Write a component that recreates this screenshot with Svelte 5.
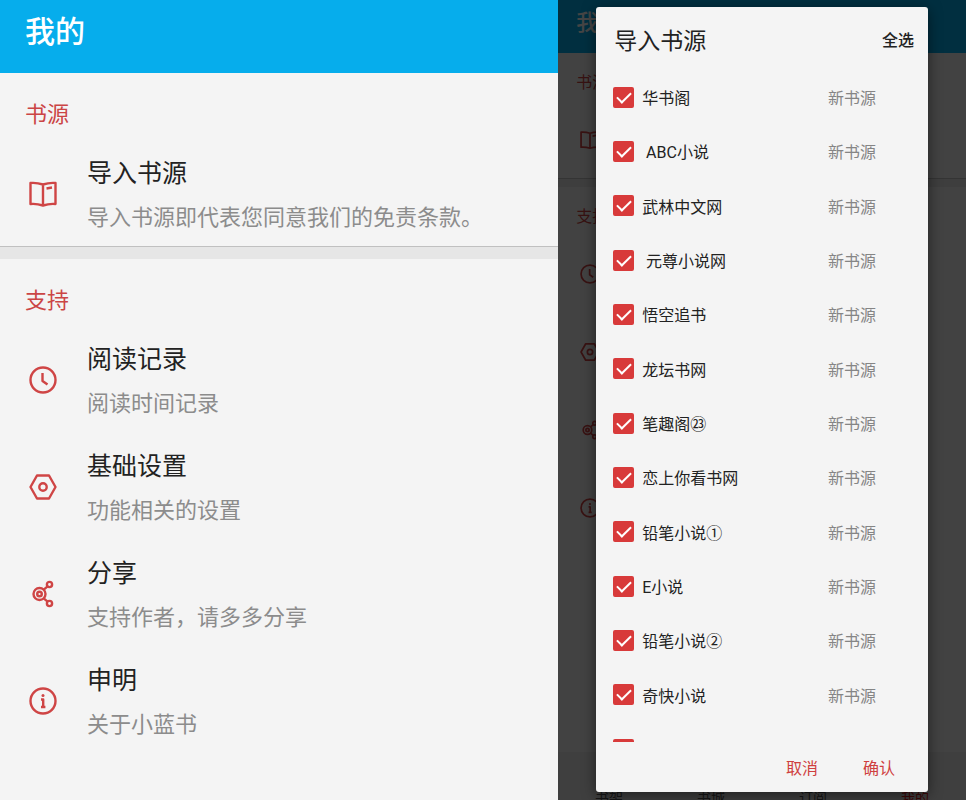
<script lang="ts">
	type Item = { icon: string; title: string; note: string };
	type Source = { name: string; checked: boolean };

	const groups: { label: string; items: Item[] }[] = [
		{
			label: '书源',
			items: [{ icon: 'book', title: '导入书源', note: '导入书源即代表您同意我们的免责条款。' }]
		},
		{
			label: '支持',
			items: [
				{ icon: 'clock', title: '阅读记录', note: '阅读时间记录' },
				{ icon: 'setting', title: '基础设置', note: '功能相关的设置' },
				{ icon: 'share', title: '分享', note: '支持作者，请多多分享' },
				{ icon: 'info', title: '申明', note: '关于小蓝书' }
			]
		}
	];

	const names = [
		'华书阁',
		' ABC小说',
		'武林中文网',
		' 元尊小说网',
		'悟空追书',
		'龙坛书网',
		'笔趣阁㉓',
		'恋上你看书网',
		'铅笔小说①',
		'E小说',
		'铅笔小说②',
		'奇快小说',
		''
	];

	let sources: Source[] = $state(names.map((name) => ({ name, checked: true })));
	const tabs = ['书架', '书城', '订阅', '我的'];

	function selectAll() {
		const next = !sources.every((s) => s.checked);
		sources.forEach((s) => (s.checked = next));
	}
</script>

{#snippet icon(name: string)}
	<svg class="icon" viewBox="0 0 28 28" aria-hidden="true">
		{#if name === 'book'}
			<path d="M14 4.5 Q8 2.5 1.5 3 V24 Q8 23.5 14 25.5 Q20 23.5 26.5 24 V3 Q20 2.5 14 4.5 V25.5" />
			<path d="M17.5 8.5 L23 7.5" />
		{:else if name === 'clock'}
			<circle cx="14" cy="14" r="12.5" />
			<path d="M13.5 7 V15 L18.5 18.5" />
		{:else if name === 'setting'}
			<path d="M8 2.5 H20 L26.5 14 L20 25.5 H8 L1.5 14 Z" />
			<circle cx="14" cy="14" r="3.7" />
		{:else if name === 'share'}
			<circle cx="10.5" cy="14" r="6" />
			<circle cx="10.5" cy="14" r="2.3" />
			<circle cx="20.5" cy="4.5" r="2.6" />
			<circle cx="20.5" cy="23.5" r="2.6" />
			<path d="M14.7 9.7 L18.6 6.4 M14.7 18.3 L18.6 21.6" />
		{:else}
			<circle cx="14" cy="14" r="12.5" />
			<path d="M12 12.5 H14.2 V20 M12 20 H16.4" />
			<circle class="dot" cx="14" cy="8.5" r="1.5" />
		{/if}
	</svg>
{/snippet}

{#snippet screen()}
	<header class="bar">
		<h1>我的</h1>
	</header>
	{#each groups as group}
		<section class="group">
			<h2>{group.label}</h2>
			<div class="items">
				{#each group.items as item}
					<button class="item" type="button">
						{@render icon(item.icon)}
						<span class="text">
							<span class="title">{item.title}</span>
							<span class="note">{item.note}</span>
						</span>
					</button>
				{/each}
			</div>
		</section>
	{/each}
{/snippet}

<main class="page">
	<div class="phone">
		{@render screen()}
	</div>

	<div class="phone small">
		<div class="behind" inert>
			{@render screen()}
			<nav class="tabs">
				{#each tabs as tab, i}
					<a href="#tab{i}" class:active={tab === '我的'}>{tab}</a>
				{/each}
			</nav>
		</div>
		<div class="mask">
			<div class="dialog" role="dialog" aria-labelledby="dialog-title">
				<header class="dialog-head">
					<h2 id="dialog-title">导入书源</h2>
					<button type="button" onclick={selectAll}>全选</button>
				</header>
				<ul class="sources">
					{#each sources as source}
						<li>
							<label>
								<input type="checkbox" bind:checked={source.checked} />
								<span class="name">{source.name}</span>
								{#if source.name}
									<span class="tag">新书源</span>
								{/if}
							</label>
						</li>
					{/each}
				</ul>
				<footer class="dialog-foot">
					<button type="button">取消</button>
					<button type="button">确认</button>
				</footer>
			</div>
		</div>
	</div>
</main>

<style>
	:global(body) {
		margin: 0;
		font-family: Roboto, 'Noto Sans CJK SC', sans-serif;
	}
	h1,
	h2,
	ul {
		margin: 0;
		padding: 0;
		font-weight: 400;
	}
	button {
		padding: 0;
		border: 0;
		background: none;
		font: inherit;
		color: inherit;
		cursor: pointer;
	}
	.page {
		display: grid;
		grid-template-columns: 26fr 19fr;
		height: 100vh;
		min-height: 600px;
	}
	.phone {
		--bar: 73px;
		--bar-pad: 16px;
		--bar-text: 30px;
		--side: 25px;
		--label: 69px;
		--label-pad: 14px;
		--label-text: 22px;
		--row: 105px;
		--icon: 28px;
		--icon-gap: 30px;
		--line: 44px;
		--title: 25px;
		--note: 22px;
		--band: 12px;
		position: relative;
		overflow: hidden;
		background: #f4f4f4;
		color: #222;
	}
	.small {
		--bar: 53px;
		--bar-pad: 13px;
		--bar-text: 22px;
		--side: 18px;
		--label: 50px;
		--label-pad: 10px;
		--label-text: 16px;
		--row: 76px;
		--icon: 20px;
		--icon-gap: 22px;
		--line: 32px;
		--title: 18px;
		--note: 16px;
		--band: 8px;
	}
	.bar {
		box-sizing: border-box;
		display: flex;
		align-items: center;
		height: var(--bar);
		padding: 0 var(--side) var(--bar-pad);
		background: #06adec;
		color: #fff;
	}
	.bar h1 {
		font-size: var(--bar-text);
		font-weight: 500;
	}
	.group + .group {
		border-top: var(--band) solid #e6e6e6;
		box-shadow: 0 -1px #c0c0c0;
	}
	.group h2 {
		box-sizing: border-box;
		height: var(--label);
		padding: var(--label-pad) var(--side) 0;
		font-size: var(--label-text);
		line-height: calc(var(--label) - var(--label-pad));
		color: #cb4545;
	}
	.items {
		display: grid;
		gap: 2px;
	}
	.item {
		display: flex;
		align-items: center;
		gap: var(--icon-gap);
		height: var(--row);
		padding: 0 calc(var(--side) + 4px);
		text-align: left;
	}
	.icon {
		flex: none;
		width: var(--icon);
		height: var(--icon);
		margin-bottom: 2px;
		fill: none;
		stroke: #cf4545;
		stroke-width: 2.4;
		stroke-linejoin: round;
	}
	.icon .dot {
		fill: #cf4545;
		stroke: none;
	}
	.text {
		display: grid;
		padding-top: 2px;
		line-height: var(--line);
		white-space: nowrap;
	}
	.title {
		font-size: var(--title);
	}
	.note {
		font-size: var(--note);
		color: #8c8c8c;
	}
	.behind {
		display: flex;
		flex-direction: column;
		height: 100%;
	}
	.tabs {
		display: grid;
		grid-template-columns: repeat(4, 1fr);
		height: 48px;
		margin-top: auto;
		background: #e8e8e8;
		font-size: 14px;
		line-height: 92px;
		text-align: center;
	}
	.tabs a {
		color: #555;
		text-decoration: none;
	}
	.tabs .active {
		color: #e02020;
	}
	.mask {
		position: absolute;
		inset: 0;
		display: flex;
		padding: 7px 38px 8px;
		background: rgb(0 0 0 / 0.73);
	}
	.dialog {
		flex: 1;
		display: flex;
		flex-direction: column;
		min-width: 0;
		border-radius: 3px;
		background: #f4f4f4;
		box-shadow: 0 3px 14px rgb(0 0 0 / 0.5);
		font-size: 16px;
	}
	.dialog-head {
		display: flex;
		align-items: center;
		justify-content: space-between;
		height: 63px;
		padding: 0 14px 0 18px;
	}
	.dialog-head h2 {
		font-size: 23px;
	}
	.dialog-head button {
		font-weight: 500;
	}
	/* twelve rows share the height, the next one peeks out below */
	.sources {
		flex: 1;
		display: grid;
		grid-auto-rows: calc((100% - 20px) / 12);
		min-height: 0;
		overflow: hidden;
		list-style: none;
	}
	.sources label {
		display: flex;
		align-items: center;
		gap: 8px;
		height: 100%;
		padding: 0 52px 0 17px;
	}
	.sources input {
		appearance: none;
		display: grid;
		justify-content: center;
		flex: none;
		width: 21px;
		height: 21px;
		margin: 0;
		border: 2px solid #d83a3a;
		border-radius: 2px;
	}
	.sources input:checked {
		background: #d83a3a;
	}
	.sources input:checked::before {
		content: '';
		width: 6px;
		height: 12px;
		border: solid #fff;
		border-width: 0 2px 2px 0;
		transform: rotate(45deg);
	}
	.name {
		flex: 1;
		white-space: pre;
	}
	.tag {
		color: #858585;
	}
	.dialog-foot {
		display: flex;
		align-items: center;
		justify-content: flex-end;
		gap: 45px;
		height: 50px;
		padding-right: 33px;
		color: #cf3f3f;
	}
</style>
